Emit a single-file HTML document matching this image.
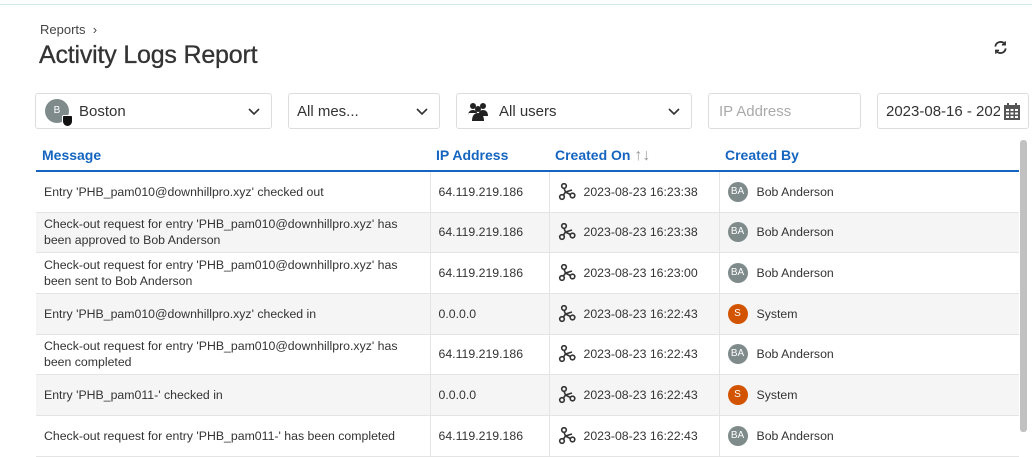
<!DOCTYPE html>
<html><head><meta charset="utf-8"><style>
*{box-sizing:border-box;margin:0;padding:0}
body{width:1032px;height:456px;overflow:hidden;background:#fff;font-family:"Liberation Sans","DejaVu Sans",sans-serif;color:#333;position:relative}
.topline{position:absolute;left:0;right:0;top:4px;height:1px;background:#cfe9ec}
.crumb{position:absolute;left:40px;top:22px;font-size:13px;color:#444}
h1{position:absolute;left:39px;top:41px;font-size:25px;font-weight:normal;color:#333;letter-spacing:-0.2px;-webkit-text-stroke:0.3px #333}
.box{position:absolute;top:93px;height:36px;border:1px solid #ddd;border-radius:3px;font-size:15px;color:#333;display:flex;align-items:center}
.chev{position:absolute;right:10px;top:10px}
.av{display:inline-flex;width:20px;height:20px;border-radius:50%;color:#fff;font-size:10px;line-height:20px;align-items:center;justify-content:center;margin-right:9px;flex:none}
.ba{background:#7f8a8a}.s{background:#d35400}
table{position:absolute;left:36px;top:143px;width:983px;border-collapse:collapse;font-size:12.3px;color:#333}
th{height:28px;text-align:left;color:#1565c0;font-weight:bold;font-size:14px;padding:4px 6px 0;border-bottom:2px solid #1565c0;vertical-align:top}
td{padding:0 8px;border-right:1px solid #e4e4e4;border-bottom:1px solid #e4e4e4;line-height:16px}
td:last-child{border-right:none}
tr.g td{background:#f5f5f5}
.cell{display:flex;align-items:center}
.cm{width:18px;height:18px;margin-right:8px;flex:none}
.scroll{position:absolute;left:1020px;top:140px;width:7px;height:292px;background:#c1c1c1;border-radius:3px}
</style></head><body>
<svg width="0" height="0" style="position:absolute"><defs><symbol id="cmd" viewBox="0 0 18 18"><g fill="none" stroke="#333" stroke-width="1.6"><circle cx="4" cy="14" r="2.3"/><circle cx="14.5" cy="12.5" r="2.3"/><circle cx="6" cy="3" r="2.3"/><path d="M6 5.3L7.5 9L5.5 12"/><path d="M7.5 9L12.3 11.5"/><path d="M7.5 9L14 7"/></g></symbol></defs></svg>
<div class="topline"></div>
<div class="crumb">Reports &nbsp;›</div>
<h1>Activity Logs Report</h1>
<svg style="position:absolute;left:993px;top:40px" width="15" height="15" viewBox="0 0 16 16" fill="none" stroke="#333" stroke-width="2"><path d="M2.5 7a5.5 5.5 0 0 1 10-2.5"/><path d="M13.5 9a5.5 5.5 0 0 1-10 2.5"/><path d="M13 1.5v3.5h-3.5" stroke-width="1.6"/><path d="M3 14.5v-3.5h3.5" stroke-width="1.6"/></svg>

<div class="box" style="left:35px;width:237px;padding-left:9px">
 <span class="av ba" style="width:24px;height:24px;position:relative;margin-right:10px">B<span style="position:absolute;right:-4px;bottom:-4px;width:11px;height:12px;background:#111;border-radius:2px 2px 6px 6px;border:1px solid #fff"></span></span>Boston
 <svg class="chev" width="14" height="14" viewBox="0 0 14 14"><path d="M2 5l5 5 5-5" fill="none" stroke="#333" stroke-width="1.6"/></svg></div>
<div class="box" style="left:288px;width:152px;padding-left:8px">All mes...
 <svg class="chev" width="14" height="14" viewBox="0 0 14 14"><path d="M2 5l5 5 5-5" fill="none" stroke="#333" stroke-width="1.6"/></svg></div>
<div class="box" style="left:456px;width:236px;padding-left:10px">
 <svg width="22" height="20" viewBox="0 0 22 20" style="margin-right:10px"><g fill="#222"><circle cx="6" cy="5" r="3"/><circle cx="16" cy="5" r="3"/><circle cx="11" cy="8" r="3"/><path d="M1 15c0-4 2-6 5-6s4 2 4 3H1z"/><path d="M12 12c0-1 1-3 4-3s5 2 5 6h-9z"/><path d="M5 20c0-5 2-8 6-8s6 3 6 8z"/></g></svg>All users
 <svg class="chev" width="14" height="14" viewBox="0 0 14 14"><path d="M2 5l5 5 5-5" fill="none" stroke="#333" stroke-width="1.6"/></svg></div>
<div class="box" style="left:708px;width:153px;padding-left:10px;color:#aaa">IP Address</div>
<div class="box" style="left:877px;width:152px;padding-left:8px;overflow:hidden;white-space:nowrap">2023-08-16 - 2023
 <span style="position:absolute;right:0;top:0;width:28px;height:34px;background:#fff"></span>
 <svg style="position:absolute;right:8px;top:9px" width="16" height="17" viewBox="0 0 16 17"><rect x="0" y="2" width="16" height="15" fill="#555"/><rect x="3" y="0" width="2" height="4" fill="#555"/><rect x="11" y="0" width="2" height="4" fill="#555"/><g fill="#fff"><rect x="2" y="6" width="3" height="2"/><rect x="6.5" y="6" width="3" height="2"/><rect x="11" y="6" width="3" height="2"/><rect x="2" y="9.5" width="3" height="2"/><rect x="6.5" y="9.5" width="3" height="2"/><rect x="11" y="9.5" width="3" height="2"/><rect x="2" y="13" width="3" height="2"/><rect x="6.5" y="13" width="3" height="2"/><rect x="11" y="13" width="3" height="2"/></g></svg></div>

<table>
<colgroup><col style="width:394px"><col style="width:119px"><col style="width:170px"><col></colgroup>
<tr><th>Message</th><th>IP Address</th><th>Created On <span style="color:#999;font-weight:normal;font-size:16px">↑↓</span></th><th>Created By</th></tr>
<tbody>
<tr style="height:41px"><td>Entry 'PHB_pam010@downhillpro.xyz' checked out</td><td>64.119.219.186</td><td><div class="cell"><svg class="cm"><use href="#cmd"/></svg>2023-08-23 16:23:38</div></td><td><div class="cell"><span class="av ba">BA</span>Bob Anderson</div></td></tr>
<tr class="g" style="height:40px"><td>Check-out request for entry 'PHB_pam010@downhillpro.xyz' has been approved to Bob Anderson</td><td>64.119.219.186</td><td><div class="cell"><svg class="cm"><use href="#cmd"/></svg>2023-08-23 16:23:38</div></td><td><div class="cell"><span class="av ba">BA</span>Bob Anderson</div></td></tr>
<tr style="height:41px"><td>Check-out request for entry 'PHB_pam010@downhillpro.xyz' has been sent to Bob Anderson</td><td>64.119.219.186</td><td><div class="cell"><svg class="cm"><use href="#cmd"/></svg>2023-08-23 16:23:00</div></td><td><div class="cell"><span class="av ba">BA</span>Bob Anderson</div></td></tr>
<tr class="g" style="height:41px"><td>Entry 'PHB_pam010@downhillpro.xyz' checked in</td><td>0.0.0.0</td><td><div class="cell"><svg class="cm"><use href="#cmd"/></svg>2023-08-23 16:22:43</div></td><td><div class="cell"><span class="av s">S</span>System</div></td></tr>
<tr style="height:40px"><td>Check-out request for entry 'PHB_pam010@downhillpro.xyz' has been completed</td><td>64.119.219.186</td><td><div class="cell"><svg class="cm"><use href="#cmd"/></svg>2023-08-23 16:22:43</div></td><td><div class="cell"><span class="av ba">BA</span>Bob Anderson</div></td></tr>
<tr class="g" style="height:41px"><td>Entry 'PHB_pam011-' checked in</td><td>0.0.0.0</td><td><div class="cell"><svg class="cm"><use href="#cmd"/></svg>2023-08-23 16:22:43</div></td><td><div class="cell"><span class="av s">S</span>System</div></td></tr>
<tr style="height:41px"><td>Check-out request for entry 'PHB_pam011-' has been completed</td><td>64.119.219.186</td><td><div class="cell"><svg class="cm"><use href="#cmd"/></svg>2023-08-23 16:22:43</div></td><td><div class="cell"><span class="av ba">BA</span>Bob Anderson</div></td></tr>
</tbody></table>
<div class="scroll"></div>
</body></html>
